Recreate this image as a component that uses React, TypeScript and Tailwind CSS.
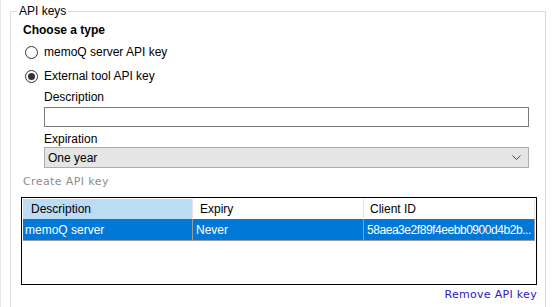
import React from "react";

const ui = { fontFamily: '"Liberation Sans", Arial, sans-serif' };
const tahoma = { fontFamily: '"DejaVu Sans", Verdana, sans-serif' };

function Radio({ checked, label }: { checked?: boolean; label: string }) {
  return (
    <div className="flex items-center h-[24px] ml-[2px]">
      <span className="w-[13px] h-[13px] rounded-full border border-[#333333] bg-white flex items-center justify-center">
        {checked && <span className="w-[7px] h-[7px] rounded-full bg-[#333333]" />}
      </span>
      <span className="ml-[6px] text-[12px] text-black">{label}</span>
    </div>
  );
}

export default function App() {
  return (
    <div className="w-[553px] h-[307px] bg-white overflow-hidden border-l border-[#e8e8e8]" style={ui}>
      <div className="relative ml-[9px] mt-[11px] w-[536px] h-[320px] border border-[#dcdcdc]">
        <span className="absolute -top-[8px] left-[6px] bg-white px-[2px] text-[12px] leading-[14px] text-black">
          API keys
        </span>
        <div className="pl-[12px] pt-[10px]">
          <div className="h-[16px] flex items-center text-[12px] font-bold text-black">Choose a type</div>
          <div className="mt-[2px]">
            <Radio label="memoQ server API key" />
            <Radio checked label="External tool API key" />
          </div>
          <div className="pl-[21px]">
            <div className="h-[18px] flex items-center text-[12px] text-black">Description</div>
            <div className="mt-[1px] w-[485px] h-[20px] border border-[#7a7a7a] bg-white" />
            <div className="mt-[4px] h-[16px] flex items-center text-[12px] text-black">Expiration</div>
            <div className="w-[485px] h-[21px] border border-[#adadad] bg-[#e5e5e5] flex items-center justify-between pl-[3px] pr-[7px]">
              <span className="text-[12px] text-black">One year</span>
              <svg width="9" height="6" viewBox="0 0 9 6">
                <polyline points="0.5,0.5 4.5,4.5 8.5,0.5" fill="none" stroke="#444" strokeWidth="1" />
              </svg>
            </div>
          </div>
          <div className="mt-[6px] h-[16px] flex items-center text-[11px] text-[#8d8d8d] tracking-[0.4px]" style={tahoma}>
            Create API key
          </div>
          <div className="mt-[7px] -ml-[2px] w-[516px] h-[88px] border border-black p-[1px] bg-white">
            <div className="flex h-[20px] text-[12px] text-black">
              <div className="w-[170px] bg-[#bcdcf4] border-r border-[#e5e5e5] pl-[8px] flex items-center">Description</div>
              <div className="w-[171px] border-r border-[#e5e5e5] pl-[7px] flex items-center">Expiry</div>
              <div className="w-[171px] border-r border-[#e5e5e5] pl-[6px] flex items-center">Client ID</div>
            </div>
            <div className="flex h-[22px] text-[12px] text-white bg-[#0078d7] border-b border-[#9b9b9b]">
              <div className="w-[170px] border-r border-[#9b9b9b] pl-[2px] flex items-center">memoQ server</div>
              <div className="w-[171px] border-r border-[#9b9b9b] pl-[3px] flex items-center">Never</div>
              <div className="w-[171px] border-r border-[#9b9b9b] pl-[3px] flex items-center whitespace-nowrap overflow-hidden tracking-[-0.45px]">58aea3e2f89f4eebb0900d4b2b...</div>
            </div>
          </div>
          <div className="mt-[2px] w-[514px] h-[16px] flex items-center justify-end text-[11px] text-[#2a19c8] tracking-[0.3px]" style={tahoma}>
            Remove API key
          </div>
        </div>
      </div>
    </div>
  );
}
